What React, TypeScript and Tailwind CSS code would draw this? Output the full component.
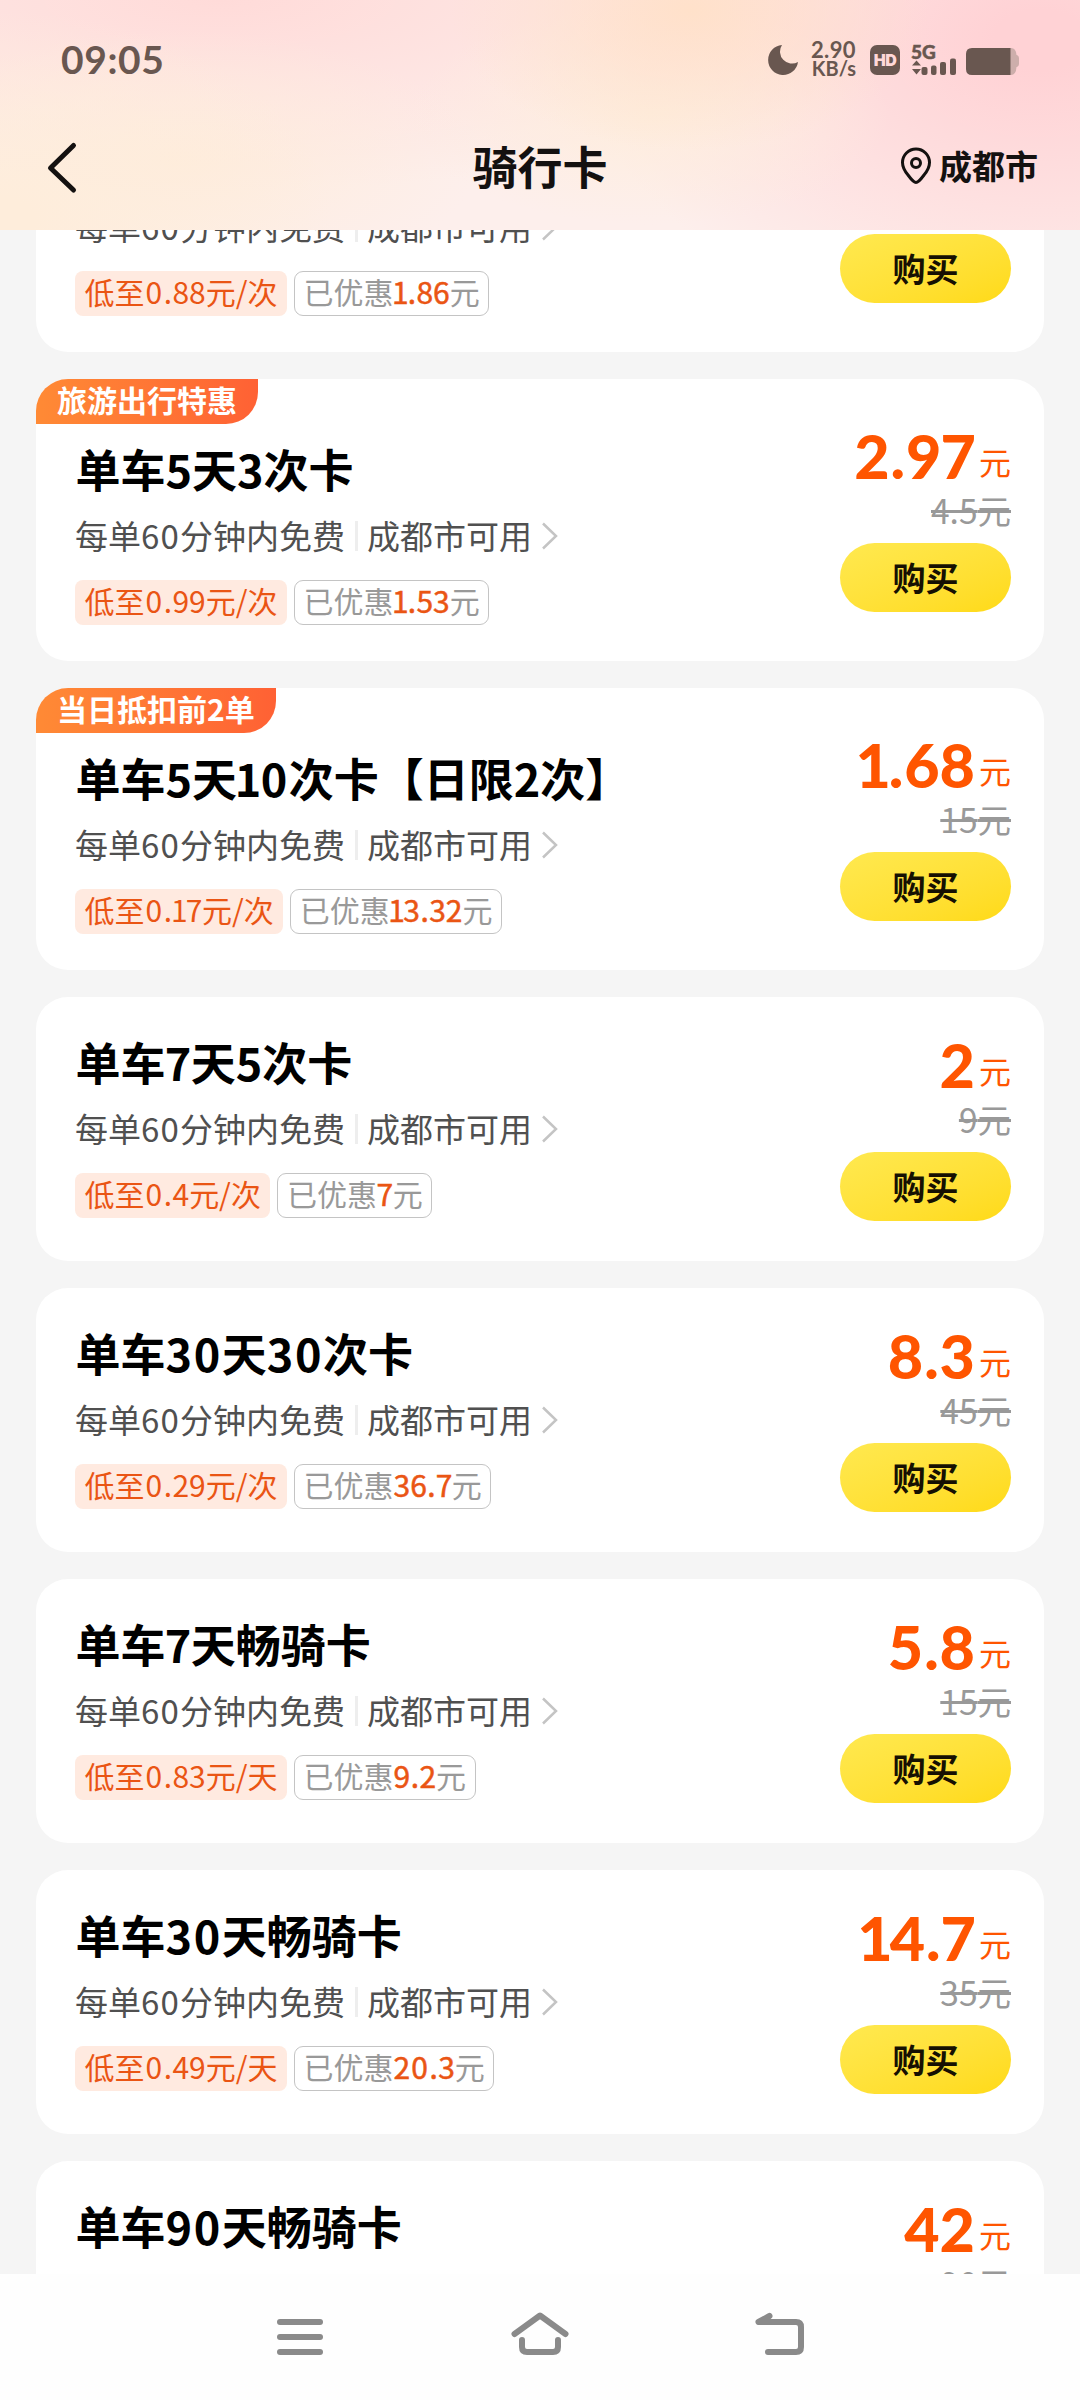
import React from 'react';
import clsx from 'clsx';

interface Plan {
  badge?: string;
  title: string;
  price: string;
  oldPrice: string;
  lowest: string;
  saved: string;
  unit?: string;
}

const plans: Plan[] = [
  { badge: '', title: '', price: '', oldPrice: '', lowest: '0.88', saved: '1.86' },
  { badge: '旅游出行特惠', title: '单车5天3次卡', price: '2.97', oldPrice: '4.5', lowest: '0.99', saved: '1.53' },
  { badge: '当日抵扣前2单', title: '单车5天10次卡【日限2次】', price: '1.68', oldPrice: '15', lowest: '0.17', saved: '13.32' },
  { title: '单车7天5次卡', price: '2', oldPrice: '9', lowest: '0.4', saved: '7' },
  { title: '单车30天30次卡', price: '8.3', oldPrice: '45', lowest: '0.29', saved: '36.7' },
  { title: '单车7天畅骑卡', price: '5.8', oldPrice: '15', lowest: '0.83', saved: '9.2', unit: '天' },
  { title: '单车30天畅骑卡', price: '14.7', oldPrice: '35', lowest: '0.49', saved: '20.3', unit: '天' },
  { title: '单车90天畅骑卡', price: '42', oldPrice: '90', lowest: '0.47', saved: '48', unit: '天' },
];

// proportional figures: a zero is wider than a one
const figureSpacing: Record<string, string> = {
  '0': 'mx-[0.035em]',
  '1': '-mx-[0.05em]',
  '7': '-mx-[0.015em]',
  '.': 'mx-[0.015em]',
};

const Figures: React.FC<{ text: string }> = ({ text }) => (
  <>
    {text.split(/([017.])/).map((part, i) =>
      figureSpacing[part] ? <span key={i} className={figureSpacing[part]}>{part}</span> : part
    )}
  </>
);

const StatusBar: React.FC = () => (
  <div className="flex h-[105px] items-start justify-between pl-[61px] pr-[60px] text-[#695750]">
    <span className="mt-[36px] font-['Lato'] text-[39px] font-bold leading-[46px] tracking-[0.6px]">09:05</span>
    <div className="mt-[40px] flex h-[40px] items-start">
      <svg className="mt-[5px]" width="30" height="30" viewBox="0 0 30 30" fill="currentColor">
        <path d="M14 0A15 15 0 1 0 30 17A12 12 0 0 1 14 0Z" />
      </svg>
      <div className="ml-[12px] flex w-[46px] flex-col items-end font-['Lato'] text-[22px] font-bold leading-[19px]">
        <span className="tracking-[0.4px]">2.90</span>
        <span className="text-[20px]">KB/s</span>
      </div>
      <div className="ml-[14px] mt-[5px] flex h-[30px] w-[30px] items-center justify-center rounded-[7px] bg-[#695750] font-['Inter'] text-[16px] font-black leading-none tracking-[-0.5px] text-[#ffd8d8]">
        HD
      </div>
      <svg className="ml-[11px] mt-[4px]" width="46" height="32" viewBox="0 0 46 32" fill="currentColor">
        <text x="0" y="15" fontSize="19" fontWeight="900" fontFamily="Lato" stroke="currentColor" strokeWidth="0.5">5G</text>
        <path d="M5.5 16.5L10 21.5H1ZM1 25H10L5.5 30.5Z" />
        <rect x="10.5" y="23" width="6" height="8" rx="2" />
        <rect x="20" y="21.5" width="5.5" height="9.5" rx="2" />
        <rect x="29" y="18" width="6" height="13" rx="2" />
        <rect x="39" y="14.5" width="6" height="16.5" rx="2" />
      </svg>
      <svg className="ml-[9px] mt-[8px]" width="54" height="28" viewBox="0 0 54 28">
        <path d="M44 0H45Q50 0 50.5 7H51Q53 8 53 10V16Q53 18 51 19H50.5Q50 27 45 27H44Z" fill="#cdaeab" />
        <path d="M6 0H44.500V27H6Q0 27 0 21V6Q0 0 6 0Z" fill="#695750" />
      </svg>
    </div>
  </div>
);

const Header: React.FC = () => (
  <header className="h-[230px] shrink-0 bg-[#fdefec] bg-[radial-gradient(ellipse_330px_210px_at_0px_220px,#feeddb_10%,transparent_100%),radial-gradient(ellipse_300px_130px_at_180px_160px,#feecdc_0%,transparent_100%),radial-gradient(ellipse_240px_140px_at_690px_10px,#ffe1ca_0%,transparent_100%),radial-gradient(ellipse_240px_110px_at_650px_115px,#feeddd_0%,transparent_100%),radial-gradient(ellipse_460px_300px_at_1040px_40px,#ffd2d5_10%,transparent_100%),radial-gradient(ellipse_700px_190px_at_220px_0px,#ffdbd9_0%,transparent_100%)]">
    <StatusBar />
    <div className="grid h-[125px] grid-cols-3 items-start text-[#141110]">
      <svg className="ml-[45px] mt-[35px]" width="34" height="56" viewBox="0 0 34 56" fill="none" stroke="currentColor" strokeWidth="5" strokeLinecap="round" strokeLinejoin="round">
        <path d="M28.500 5.500L5.500 28L28.500 50" />
      </svg>
      <h1 className="mt-[31px] text-center text-[45px] font-bold leading-[60px]">骑行卡</h1>
      <div className="mr-[42px] mt-[35px] flex items-center justify-end gap-[7px]">
        <svg className="mt-[2px]" width="32" height="38" viewBox="0 0 32 38" fill="none" stroke="currentColor" strokeWidth="3">
          <path d="M16 35.500Q13.500 35.500 8 28Q2.500 21.500 2.500 15.500A13.500 13.500 0 0 1 29.500 15.500Q29.500 21.500 24 28Q18.500 35.500 16 35.500Z" />
          <circle cx="16" cy="16" r="4.500" />
        </svg>
        <span className="text-[33px] font-bold leading-[50px]">成都市</span>
      </div>
    </div>
  </header>
);

const PlanCard: React.FC<{ plan: Plan }> = ({ plan }) => {
  const tall = plan.badge !== undefined;

  return (
    <div className={clsx('flex shrink-0 justify-between rounded-[32px] bg-white', tall ? 'h-[282px]' : 'h-[264px]')}>
      <div className="flex flex-col items-start">
        <div className={tall ? 'h-[60px]' : 'h-[35px]'}>
          {plan.badge && (
            <div className="h-[45px] rounded-br-[32px] rounded-tl-[32px] bg-linear-to-r from-[#ff8a35] to-[#ff6134] px-[21px] text-[30px] font-bold leading-[41px] text-white">
              {plan.badge}
            </div>
          )}
        </div>
        <h2 className="ml-[39.5px] h-[60px] whitespace-nowrap text-[45px] font-bold leading-[59px] text-black">
          <Figures text={plan.title} />
        </h2>
        <div className="ml-[39px] mt-[11px] flex h-[50px] items-center whitespace-nowrap text-[33px] leading-[50px] text-[#505050]">
          <span><Figures text="每单60分钟内免费" /></span>
          <span className="ml-[10px] mr-[9px] mt-[2px] h-[30px] w-[3px] bg-[#eee]" />
          <span>成都市可用</span>
          <svg className="ml-[9px] mt-[2px]" width="18" height="28" viewBox="0 0 18 28" fill="none" stroke="#c4c4c4" strokeWidth="2.500">
            <path d="M2 1.500L15 14L2 26.500" />
          </svg>
        </div>
        <div className="ml-[39px] mt-[20px] flex h-[45px] gap-[7px] whitespace-nowrap text-[30px] leading-[39px]">
          <span className="rounded-[8px] bg-[#ffeae0] px-[9.5px] pt-px text-[#ea5514]">
            低至<Figures text={plan.lowest} />元/{plan.unit ?? '次'}
          </span>
          <span className="rounded-[9px] border-[1.5px] border-[#c4c4c4] px-[8.5px] text-[#999]">
            已优惠<span className="text-[#ea5514] [-webkit-text-stroke:0.5px_#ea5514]"><Figures text={plan.saved} /></span>元
          </span>
        </div>
      </div>

      <div className="mr-[33px] flex flex-col items-end self-center pt-[2px]">
        <div className="flex h-[56px] items-end gap-[4px] text-[#ff5500]">
          <span className="font-['Lato'] text-[61px] font-black leading-[61px]"><Figures text={plan.price} /></span>
          <span className="text-[32px] leading-[50px]">元</span>
        </div>
        <div className="mb-[11px] mt-[2px] h-[44px] text-[33.5px] leading-[44px] text-[#999] line-through decoration-[3px]">{plan.oldPrice}元</div>
        <button className="h-[69px] w-[171px] rounded-full bg-linear-to-br from-[#ffe94f] to-[#ffda14] text-[33px] font-bold leading-[65px] text-[#161002]">
          购买
        </button>
      </div>
    </div>
  );
};

const NavBar: React.FC = () => (
  <nav className="flex h-[126px] shrink-0 items-start justify-center gap-[180px] bg-[#fefefe] pt-[36px] text-[#8a8a8a]">
    <svg width="60" height="48" viewBox="0 0 60 48" fill="currentColor">
      <rect x="7" y="9" width="46" height="6" rx="3" />
      <rect x="7" y="24" width="46" height="6" rx="3" />
      <rect x="7" y="39" width="46" height="6" rx="3" />
    </svg>
    <svg width="60" height="48" viewBox="0 0 60 48" fill="none" stroke="currentColor" strokeWidth="6" strokeLinecap="round" strokeLinejoin="round">
      <path d="M4.500 24L30 5.500L55.500 24" />
      <path d="M12 30V37Q12 42 17 42H43Q48 42 48 37V30" />
    </svg>
    <svg width="60" height="48" viewBox="0 0 60 48" fill="none" stroke="currentColor" strokeWidth="6" strokeLinecap="round" strokeLinejoin="round">
      <path d="M19.500 6L8.500 12H46Q51 12 51 17V37Q51 42 46 42H18" />
    </svg>
  </nav>
);

const App: React.FC = () => (
  <div className="flex h-[2400px] w-[1080px] flex-col overflow-hidden bg-[#f5f5f5] font-['Noto_Sans_CJK_SC',sans-serif]">
    <Header />
    <main className="min-h-0 flex-1 overflow-hidden px-[36px]">
      <div className="-mt-[160px] flex flex-col gap-[27px]">
        {plans.map((plan, i) => (
          <PlanCard key={i} plan={plan} />
        ))}
      </div>
    </main>
    <NavBar />
  </div>
);

export default App;
